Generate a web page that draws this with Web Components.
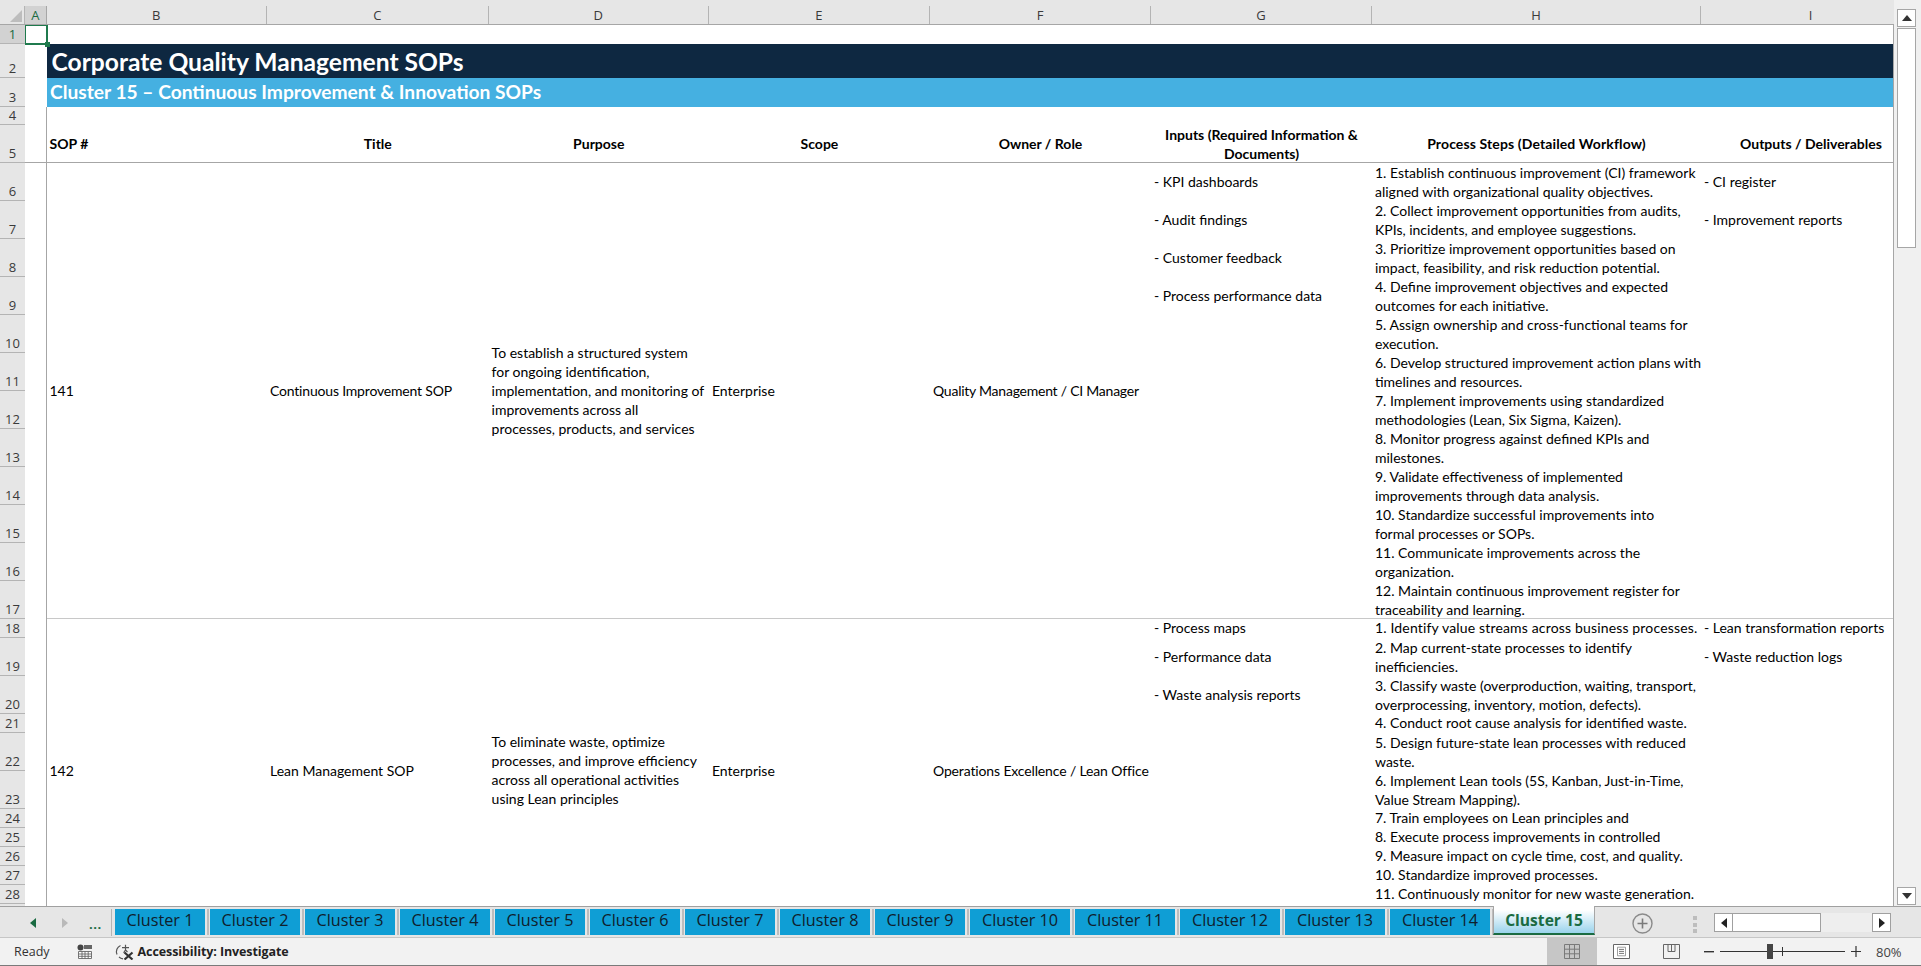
<!doctype html>
<html lang="en"><head><meta charset="utf-8"><title>Corporate Quality Management SOPs</title>
<style>html,body{margin:0;padding:0;height:100%;overflow:hidden;background:#fff}</style></head>
<body>
<x-app>
  <x-colhead slot="colhead"></x-colhead>
  <x-main slot="main">
    <x-rowhead></x-rowhead>
    <x-sheet>
      <x-cell c="A" r="4" r2="29" rule></x-cell>
      <x-cell c="A" c2="I" r="5" under></x-cell>
      <x-cell c="B" c2="I" r="2" title>Corporate Quality Management SOPs</x-cell>
      <x-cell c="B" c2="I" r="3" sub>Cluster 15 – Continuous Improvement &amp; Innovation SOPs</x-cell>
      <x-cell c="B" r="5" b>SOP #</x-cell>
      <x-cell c="C" r="5" b mid>Title</x-cell>
      <x-cell c="D" r="5" b mid>Purpose</x-cell>
      <x-cell c="E" r="5" b mid>Scope</x-cell>
      <x-cell c="F" r="5" b mid>Owner / Role</x-cell>
      <x-cell c="G" r="5" b mid>Inputs (Required Information &amp;<br>Documents)</x-cell>
      <x-cell c="H" r="5" b mid style="letter-spacing:.12px">Process Steps (Detailed Workflow)</x-cell>
      <x-cell c="I" r="5" b mid>Outputs / Deliverables</x-cell>

      <x-cell c="B" c2="I" r="17" thin></x-cell>
      <x-cell c="B" r="6" r2="17">141</x-cell>
      <x-cell c="C" r="6" r2="17" style="letter-spacing:-.19px">Continuous Improvement SOP</x-cell>
      <x-cell c="D" r="6" r2="17">To establish a structured system<br>for ongoing identification,<br>implementation, and monitoring of<br>improvements across all<br>processes, products, and services</x-cell>
      <x-cell c="E" r="6" r2="17">Enterprise</x-cell>
      <x-cell c="F" r="6" r2="17" style="letter-spacing:-.24px">Quality Management / CI Manager</x-cell>
      <x-cell c="G" r="6">- KPI dashboards</x-cell>
      <x-cell c="G" r="7">- Audit findings</x-cell>
      <x-cell c="G" r="8">- Customer feedback</x-cell>
      <x-cell c="G" r="9">- Process performance data</x-cell>
      <x-cell c="I" r="6">- CI register</x-cell>
      <x-cell c="I" r="7">- Improvement reports</x-cell>
      <x-cell c="H" r="6">1. Establish continuous improvement (CI) framework<br>aligned with organizational quality objectives.</x-cell>
      <x-cell c="H" r="7">2. Collect improvement opportunities from audits,<br>KPIs, incidents, and employee suggestions.</x-cell>
      <x-cell c="H" r="8">3. Prioritize improvement opportunities based on<br>impact, feasibility, and risk reduction potential.</x-cell>
      <x-cell c="H" r="9">4. Define improvement objectives and expected<br>outcomes for each initiative.</x-cell>
      <x-cell c="H" r="10">5. Assign ownership and cross-functional teams for<br>execution.</x-cell>
      <x-cell c="H" r="11">6. Develop structured improvement action plans with<br>timelines and resources.</x-cell>
      <x-cell c="H" r="12">7. Implement improvements using standardized<br>methodologies (Lean, Six Sigma, Kaizen).</x-cell>
      <x-cell c="H" r="13">8. Monitor progress against defined KPIs and<br>milestones.</x-cell>
      <x-cell c="H" r="14">9. Validate effectiveness of implemented<br>improvements through data analysis.</x-cell>
      <x-cell c="H" r="15">10. Standardize successful improvements into<br>formal processes or SOPs.</x-cell>
      <x-cell c="H" r="16">11. Communicate improvements across the<br>organization.</x-cell>
      <x-cell c="H" r="17">12. Maintain continuous improvement register for<br>traceability and learning.</x-cell>

      <x-cell c="B" r="18" r2="29">142</x-cell>
      <x-cell c="C" r="18" r2="29">Lean Management SOP</x-cell>
      <x-cell c="D" r="18" r2="29">To eliminate waste, optimize<br>processes, and improve efficiency<br>across all operational activities<br>using Lean principles</x-cell>
      <x-cell c="E" r="18" r2="29">Enterprise</x-cell>
      <x-cell c="F" r="18" r2="29" style="letter-spacing:-.14px">Operations Excellence / Lean Office</x-cell>
      <x-cell c="G" r="18">- Process maps</x-cell>
      <x-cell c="G" r="19">- Performance data</x-cell>
      <x-cell c="G" r="20">- Waste analysis reports</x-cell>
      <x-cell c="I" r="18">- Lean transformation reports</x-cell>
      <x-cell c="I" r="19">- Waste reduction logs</x-cell>
      <x-cell c="H" r="18" style="letter-spacing:.16px">1. Identify value streams across business processes.</x-cell>
      <x-cell c="H" r="19">2. Map current-state processes to identify<br>inefficiencies.</x-cell>
      <x-cell c="H" r="20">3. Classify waste (overproduction, waiting, transport,<br>overprocessing, inventory, motion, defects).</x-cell>
      <x-cell c="H" r="21">4. Conduct root cause analysis for identified waste.</x-cell>
      <x-cell c="H" r="22">5. Design future-state lean processes with reduced<br>waste.</x-cell>
      <x-cell c="H" r="23">6. Implement Lean tools (5S, Kanban, Just-in-Time,<br>Value Stream Mapping).</x-cell>
      <x-cell c="H" r="24">7. Train employees on Lean principles and</x-cell>
      <x-cell c="H" r="25">8. Execute process improvements in controlled</x-cell>
      <x-cell c="H" r="26">9. Measure impact on cycle time, cost, and quality.</x-cell>
      <x-cell c="H" r="27">10. Standardize improved processes.</x-cell>
      <x-cell c="H" r="28">11. Continuously monitor for new waste generation.</x-cell>
      <x-selection></x-selection>
    </x-sheet>
  </x-main>
  <x-vscroll slot="vscroll"></x-vscroll>
  <x-tabbar slot="tabbar">
    <x-tab>Cluster 1</x-tab><x-tab>Cluster 2</x-tab><x-tab>Cluster 3</x-tab><x-tab>Cluster 4</x-tab><x-tab>Cluster 5</x-tab><x-tab>Cluster 6</x-tab><x-tab>Cluster 7</x-tab><x-tab>Cluster 8</x-tab><x-tab>Cluster 9</x-tab><x-tab wide>Cluster 10</x-tab><x-tab wide>Cluster 11</x-tab><x-tab wide>Cluster 12</x-tab><x-tab wide>Cluster 13</x-tab><x-tab wide>Cluster 14</x-tab><x-tab active>Cluster 15</x-tab>
  </x-tabbar>
  <x-statusbar slot="status"></x-statusbar>
</x-app>
<script>
const COLS=[['A',21.5],['B',220.5],['C',221.6],['D',220.4],['E',221],['F',221],['G',221],['H',329],['I',220]];
const ROWS=[19,34,29,18,38.3];
for(let i=0;i<12;i++)ROWS.push(38);
ROWS.push(19,38,38,19,38,38,19,19,19,19,19,19);
const UI='"Open Sans","Noto Sans",sans-serif';
const SHEET='Lato,"Liberation Sans",sans-serif';
function def(name,css,html,init){
  customElements.define(name,class extends HTMLElement{
    constructor(){super();const s=this.attachShadow({mode:'open'});
      s.innerHTML='<style>'+css+'</style>'+(typeof html==='function'?html(this):html);}
    connectedCallback(){init&&init.call(this)}
  });
}
def('x-app',`:host{display:grid;width:1921px;height:966px;grid-template-columns:1893.5px 27.5px;grid-template-rows:25px 881px 32px 28px;background:#fff;overflow:hidden}
 ::slotted([slot=colhead]){grid-column:1;grid-row:1}
 ::slotted([slot=main]){grid-column:1;grid-row:2}
 ::slotted([slot=vscroll]){grid-column:2;grid-row:1/3}
 ::slotted([slot=tabbar]){grid-column:1/3;grid-row:3}
 ::slotted([slot=status]){grid-column:1/3;grid-row:4}`,
 `<slot name="colhead"></slot><slot name="main"></slot><slot name="vscroll"></slot><slot name="tabbar"></slot><slot name="status"></slot>`);
def('x-colhead',`:host{display:flex;background:#e6e6e6;border-bottom:1px solid #a6a6a6;box-sizing:border-box;overflow:hidden;font:13px ${UI};color:#3a3a3a}
 .corner{flex:0 0 25px;position:relative;border-right:1px solid #b4b4b4;box-sizing:border-box;margin-top:6px}
 svg{position:absolute;left:10px;top:4px}
 .c{flex:none;box-sizing:border-box;margin-top:6px;border-right:1px solid #b4b4b4;display:flex;align-items:center;justify-content:center;height:18px}
 .c.on{background:#d2d2d2;color:#1a6b42;border-right-color:#a6a6a6}`,
 ()=>`<div class="corner"><svg width="12" height="12"><path d="M12 0V12H0Z" fill="#bdbdbd"/></svg></div>`+COLS.map((c,i)=>`<div class="c${i==0?' on':''}" style="width:${c[1]}px">${c[0]}</div>`).join(''));
def('x-main',`:host{display:flex;overflow:hidden;height:881px;border-bottom:0}`,`<slot></slot>`);
def('x-rowhead',`:host{flex:0 0 25px;display:block;background:#e6e6e6;overflow:hidden;font:13px ${UI};color:#3a3a3a}
 .r{box-sizing:border-box;border-bottom:1px solid #b4b4b4;display:flex;align-items:flex-end;justify-content:center;line-height:17.5px}
 .r.on{background:#d2d2d2;color:#1a6b42}`,
 ()=>ROWS.slice(0,28).map((h,i)=>`<div class="r${i==0?' on':''}" style="height:${h}px">${i+1}</div>`).join(''));
def('x-sheet',`:host{flex:1 1 auto;min-width:0;display:grid;position:relative;overflow:hidden;background:#fff;border-right:1px solid #a6a6a6;box-sizing:border-box;font:14px/19px ${SHEET};color:#000;
   grid-template-columns:${COLS.map(c=>c[1]+'px').join(' ')};grid-template-rows:${ROWS.map(r=>r+'px').join(' ')}}`,`<slot></slot>`);
const cidx=c=>COLS.findIndex(x=>x[0]===c)+1;
def('x-cell',`:host{display:flex;align-items:center;box-sizing:border-box;padding:0 0 2px 3px;white-space:nowrap;min-width:0}
 :host([flat]){padding-bottom:0}
 :host([b]){font-weight:700}
 :host([mid]){text-align:center;justify-content:center;padding-left:0}
 :host([title]){background:#0e2841;color:#fff;font-size:24.6px;font-weight:700;padding:1px 0 0 5px;line-height:30px}
 :host([sub]){background:#45b0e1;color:#fff;font-size:19.2px;font-weight:700;padding:0 0 2px 3.5px}
 :host([under]){border-bottom:1.5px solid #a6a6a6}
 :host([thin]){border-bottom:1px solid #c8c8c8}
 :host([rule]){border-right:1.5px solid #a6a6a6}`,`<div><slot></slot></div>`,
 function(){const ca=this.getAttribute('c'),c=cidx(ca),c2=this.getAttribute('c2')?cidx(this.getAttribute('c2')):c,r=+this.getAttribute('r'),r2=+(this.getAttribute('r2')||r);
   this.style.gridArea=`${r} / ${c} / ${r2+1} / ${c2+1}`;
   if(this.querySelector('br')&&(ca==='H'||r===5))this.setAttribute('flat','');});
def('x-selection',`:host{grid-area:1/1/2/2;position:relative;box-sizing:border-box;margin:-1px -1.5px -1px -1px;border:2px solid #1f7a4d;z-index:3}
 i{position:absolute;right:-4px;bottom:-4px;width:5px;height:5px;background:#1f7a4d}`,`<i></i>`);
def('x-vscroll',`:host{display:flex;flex-direction:column;background:#f0f0f0;padding:9px 4px 1px 3.5px;box-sizing:border-box;height:906px}
 .b{flex:none;height:18px;width:19px;background:#fff;border:1px solid #a6a6a6;box-sizing:border-box;display:flex;align-items:center;justify-content:center}
 .t{flex:none;height:220px;width:19px;margin-top:1px;background:#fff;border:1px solid #a6a6a6;box-sizing:border-box}
 .d{margin-top:auto}`,
 `<div class="b"><svg width="10" height="6"><path d="M0 6L5 0L10 6Z" fill="#333"/></svg></div><div class="t"></div><div class="b d"><svg width="10" height="6"><path d="M0 0L5 6L10 0Z" fill="#333"/></svg></div>`);
def('x-tabbar',`:host{display:flex;background:#e6e6e6;border-top:1px solid #a0a0a0;border-bottom:1px solid #c6c6c6;box-sizing:border-box;height:32px;font:16.2px ${UI};position:relative}
 .nav{flex:0 0 112px;display:flex;align-items:center;border-right:1.5px solid #b4b4b4;box-sizing:border-box;height:27px;margin-top:2px;position:relative}
 .nav svg{margin-left:30px;flex:none}.nav svg+svg{margin-left:26px}
 .dots{margin-left:21px;color:#1a6b42;font:700 13px ${UI};letter-spacing:.5px;padding-top:3px}
 .tabs{display:flex;gap:3px;margin-left:3px;align-self:flex-start;padding-top:2px}
 .plus{flex:none;margin:6px 0 0 37px}
 .dv{flex:none;width:4px;margin:9px 0 0 40px;display:flex;flex-direction:column;gap:2.5px}
 .dv i{display:block;width:4px;height:4px;background:#bdbdbd}
 .hs{flex:none;display:flex;margin:6px 0 0 17px;height:19px}
 .hb{width:19px;height:19px;box-sizing:border-box;background:#fff;border:1px solid #a0a0a0;display:flex;align-items:center;justify-content:center}
 .th{width:88px;height:19px;box-sizing:border-box;background:#fff;border:1px solid #a0a0a0;border-left:0}
 .tr{width:51px;height:19px;background:#eee}`,
 `<div class="nav"><svg width="6" height="10"><path d="M6 0V10L0 5Z" fill="#1a6b42"/></svg><svg width="6" height="10"><path d="M0 0V10L6 5Z" fill="#b9b9b9"/></svg><span class="dots">...</span></div>
  <div class="tabs"><slot></slot></div>
  <svg class="plus" width="21" height="21" viewBox="0 0 21 21"><circle cx="10.5" cy="10.5" r="9.5" fill="none" stroke="#8a8a8a" stroke-width="1.4"/><path d="M10.5 5.5V15.5M5.5 10.5H15.5" stroke="#7a7a7a" stroke-width="1.6"/></svg>
  <div class="dv"><i></i><i></i><i></i></div>
  <div class="hs"><div class="hb"><svg width="6" height="10"><path d="M6 0V10L0 5Z" fill="#222"/></svg></div><div class="th"></div><div class="tr"></div><div class="hb"><svg width="6" height="10"><path d="M0 0V10L6 5Z" fill="#222"/></svg></div></div>`);
def('x-tab',`:host{flex:none;display:flex;align-items:center;justify-content:center;width:90px;height:26px;padding-bottom:4px;box-sizing:border-box;background:#0f9ed5;color:#10202c;margin-right:2px;position:relative;white-space:nowrap}
 :host([wide]){width:100px}
 :host(:not([active]))::after{content:"";position:absolute;right:-3.5px;top:0;bottom:0;width:1.5px;background:#bdbdbd}
 :host([active]){width:102px;height:29px;margin:-3px 0 0 -2px;padding-bottom:0;background:linear-gradient(#fff 15%,#9ad3ec);color:#1a6b42;font-weight:700;font-size:15.6px;border-bottom:2.5px solid #1a6b42;border-left:1px solid #a6a6a6;border-right:1px solid #a6a6a6}`,`<slot></slot>`);
def('x-statusbar',`:host{display:flex;align-items:center;background:#f2f2f2;border-bottom:1px solid #7a7a7a;box-sizing:border-box;height:28px;font:12.5px ${UI};color:#333;position:relative}
 .ready{margin-left:14px}
 svg{flex:none;display:block}
 .m{margin-left:27px}.a{margin-left:23px}
 .acc{font-weight:700;margin-left:3px;font-size:12.5px;color:#222;letter-spacing:-.1px}
 .view{margin-left:auto;display:flex;align-items:center;align-self:stretch}
 .gv{width:50px;background:#c6c6c6;display:flex;align-items:center;justify-content:center;align-self:stretch}
 .pl{margin-left:16px}.pb{margin-left:33px}
 .minus{margin-left:24px}.sl{margin-left:6px}.pc{margin-left:6px}
 .pct{margin:0 20px 0 15px;width:25px;font-size:13px;color:#444;white-space:nowrap}`,
 `<span class="ready">Ready</span>
 <svg class="m" width="15" height="15" viewBox="0 0 15 15"><circle cx="3.5" cy="3.5" r="3" fill="#444"/><rect x="7" y="1" width="8" height="4" fill="#666"/><path d="M1.5 7.5H14.5V14.5H1.5ZM1.5 10H14.5M1.5 12.3H14.5M5 7.5V14.5M8 7.5V14.5M11.2 7.5V14.5" fill="#fff" stroke="#666" stroke-width=".9"/></svg>
 <svg class="a" width="20" height="16" viewBox="0 0 20 16"><path d="M5.5 1.5A6.8 6.8 0 0 0 2 10.5M4 13A7 7 0 0 0 8 14.8" fill="none" stroke="#555" stroke-width="1.2"/><path d="M10.5 0.8V6M7 3.6H14M8.6 8.8L10.5 6L12.5 8" fill="none" stroke="#555" stroke-width="1.2"/><path d="M9.5 8.5L17.5 15.5M17.5 8.5L9.5 15.5" stroke="#333" stroke-width="2.2"/></svg>
 <span class="acc">Accessibility: Investigate</span>
 <div class="view"><div class="gv"><svg width="16" height="15" viewBox="0 0 16 15"><path d="M.5.5H15.5V14.5H.5ZM.5 5.2H15.5M.5 9.8H15.5M5.5.5V14.5M10.5.5V14.5" fill="none" stroke="#7a7a7a"/></svg></div>
 <svg class="pl" width="17" height="15" viewBox="0 0 17 15"><path d="M.5.5H16.5V14.5H.5Z" fill="#fff" stroke="#666"/><path d="M4.5 3.2H12.5V11.8H4.5Z" fill="none" stroke="#888" stroke-width=".8"/><path d="M6 5.4H11M6 7.4H11M6 9.4H11" stroke="#666" stroke-width=".9"/></svg>
 <svg class="pb" width="17" height="15" viewBox="0 0 17 15"><path d="M.5.5H16.5V14.5H.5Z" fill="none" stroke="#666"/><path d="M5 .5V7.5H12V.5M8.5.5V7.5" fill="none" stroke="#666"/></svg>
 <svg class="minus" width="10" height="2"><rect width="10" height="1.4" fill="#333"/></svg>
 <svg class="sl" width="125" height="15" viewBox="0 0 125 15"><rect y="7" width="125" height="1" fill="#333"/><rect x="47" y="0" width="6" height="15" fill="#444"/><rect x="62" y="3" width="1" height="9" fill="#333"/></svg>
 <svg class="pc" width="10" height="11"><path d="M5 0V11M0 5.5H10" stroke="#333" stroke-width="1.2"/></svg>
 <span class="pct">80%</span></div>`);
</script>
</body></html>
